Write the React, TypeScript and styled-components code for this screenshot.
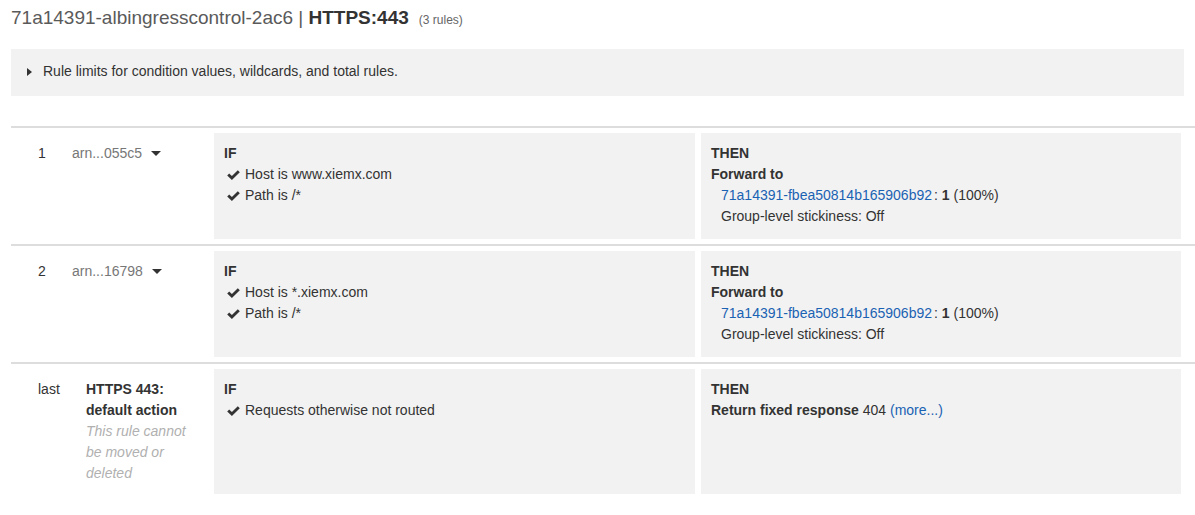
import styled, { createGlobalStyle } from 'styled-components';

const GlobalStyle = createGlobalStyle`
  html, body {
    margin: 0;
    padding: 0;
    background: #ffffff;
  }

  body {
    font-family: 'Liberation Sans', Arial, Helvetica, sans-serif;
    font-size: 14px;
    line-height: 21px;
    color: #333333;
    overflow: hidden;
  }
`;

type Rule = {
  key: string;
  order: string;
  arn?: string;
  conditions: string[];
  action: 'forward' | 'fixed';
};

const rules: Rule[] = [
  {
    key: 'r1',
    order: '1',
    arn: 'arn...055c5',
    conditions: ['Host is www.xiemx.com', 'Path is /*'],
    action: 'forward',
  },
  {
    key: 'r2',
    order: '2',
    arn: 'arn...16798',
    conditions: ['Host is *.xiemx.com', 'Path is /*'],
    action: 'forward',
  },
  {
    key: 'last',
    order: 'last',
    conditions: ['Requests otherwise not routed'],
    action: 'fixed',
  },
];

const Check = () => (
  <CheckIcon viewBox='0 0 13 10' aria-hidden='true'>
    <path d='M0.2 5.4 L2.2 3.4 L4.9 6 L10.8 0.2 L12.8 2.2 L4.9 9.9 Z' fill='#333333' />
  </CheckIcon>
);

const App = () => {
  return (
    <Page>
      <GlobalStyle />
      <Title>
        <Light>71a14391-albingresscontrol-2ac6 | </Light>
        <Strong>HTTPS:443</Strong>
        <Count>(3 rules)</Count>
      </Title>

      <Notice>
        <RightCaret />
        Rule limits for condition values, wildcards, and total rules.
      </Notice>

      <RuleList>
        {rules.map((rule) => (
          <RuleRow key={rule.key}>
            <Order>{rule.order}</Order>

            {rule.arn ? (
              <Name>
                <Arn>{rule.arn}</Arn>
                <DownCaret />
              </Name>
            ) : (
              <Name $indent>
                <DefaultLabel>HTTPS 443: default action</DefaultLabel>
                <Muted>This rule cannot be moved or deleted</Muted>
              </Name>
            )}

            <Box>
              <Label>IF</Label>
              {rule.conditions.map((c) => (
                <ConditionLine key={c}>
                  <Check />
                  {c}
                </ConditionLine>
              ))}
            </Box>

            <Box $then>
              <Label>THEN</Label>
              {rule.action === 'forward' ? (
                <>
                  <Label>Forward to</Label>
                  <Target>
                    <div>
                      <Link href='#'>71a14391-fbea50814b165906b92</Link>
                      <Colon>:</Colon> <b>1</b> (100%)
                    </div>
                    <div>Group-level stickiness: Off</div>
                  </Target>
                </>
              ) : (
                <div>
                  <b>Return fixed response</b> 404 <Link href='#'>(more...)</Link>
                </div>
              )}
            </Box>
          </RuleRow>
        ))}
      </RuleList>
    </Page>
  );
};

export default App;

const Page = styled.div`
  padding: 6px 0 0 11px;
`;

const Title = styled.h1`
  margin: 0;
  font-size: 19px;
  line-height: 24px;
  font-weight: normal;
  display: flex;
  align-items: baseline;
  white-space: pre;
`;

const Light = styled.span`
  color: #5a5a5a;
`;

const Strong = styled.span`
  font-weight: bold;
  color: #333333;
`;

const Count = styled.span`
  font-size: 12px;
  color: #666666;
  margin-left: 10px;
`;

const Notice = styled.div`
  margin: 17px 11px 0 0;
  background: #f2f2f2;
  padding: 12px 16px 14px;
  display: flex;
  align-items: center;
  color: #333333;
`;

const RightCaret = styled.span`
  width: 0;
  height: 0;
  border-top: 4px solid transparent;
  border-bottom: 4px solid transparent;
  border-left: 5px solid #333333;
  margin-right: 11px;
`;

const RuleList = styled.div`
  margin-top: 30px;
`;

const RuleRow = styled.div`
  display: grid;
  grid-template-columns: 34px 142px 481px 486px;
  align-items: stretch;
  border-top: 2px solid #dddddd;
  padding: 5px 14px 5px 27px;
`;

const Order = styled.div`
  padding-top: 10px;
  color: #333333;
`;

const Name = styled.div<{ $indent?: boolean }>`
  padding: 10px 10px 10px ${(p) => (p.$indent ? '14px' : '0')};
  display: flex;
  flex-direction: ${(p) => (p.$indent ? 'column' : 'row')};
  align-items: flex-start;
`;

const Arn = styled.span`
  color: #777777;
`;

const DownCaret = styled.span`
  width: 0;
  height: 0;
  margin: 8px 0 0 9px;
  border-left: 5px solid transparent;
  border-right: 5px solid transparent;
  border-top: 5px solid #333333;
`;

const DefaultLabel = styled.div`
  font-weight: bold;
  max-width: 112px;
`;

const Muted = styled.div`
  font-style: italic;
  color: #b0b0b0;
  max-width: 112px;
`;

const Box = styled.div<{ $then?: boolean }>`
  background: #f2f2f2;
  margin-left: ${(p) => (p.$then ? '6px' : '0')};
  padding: 10px 10px 12px;
`;

const Label = styled.div`
  font-weight: bold;
`;

const ConditionLine = styled.div`
  display: flex;
  align-items: center;
`;

const CheckIcon = styled.svg`
  width: 13px;
  height: 10px;
  margin: 0 5px 0 3px;
  flex: none;
`;

const Target = styled.div`
  padding-left: 10px;
`;

const Link = styled.a`
  color: #1a62b3;
  text-decoration: none;
`;

const Colon = styled.span`
  margin-left: 2px;
`;
